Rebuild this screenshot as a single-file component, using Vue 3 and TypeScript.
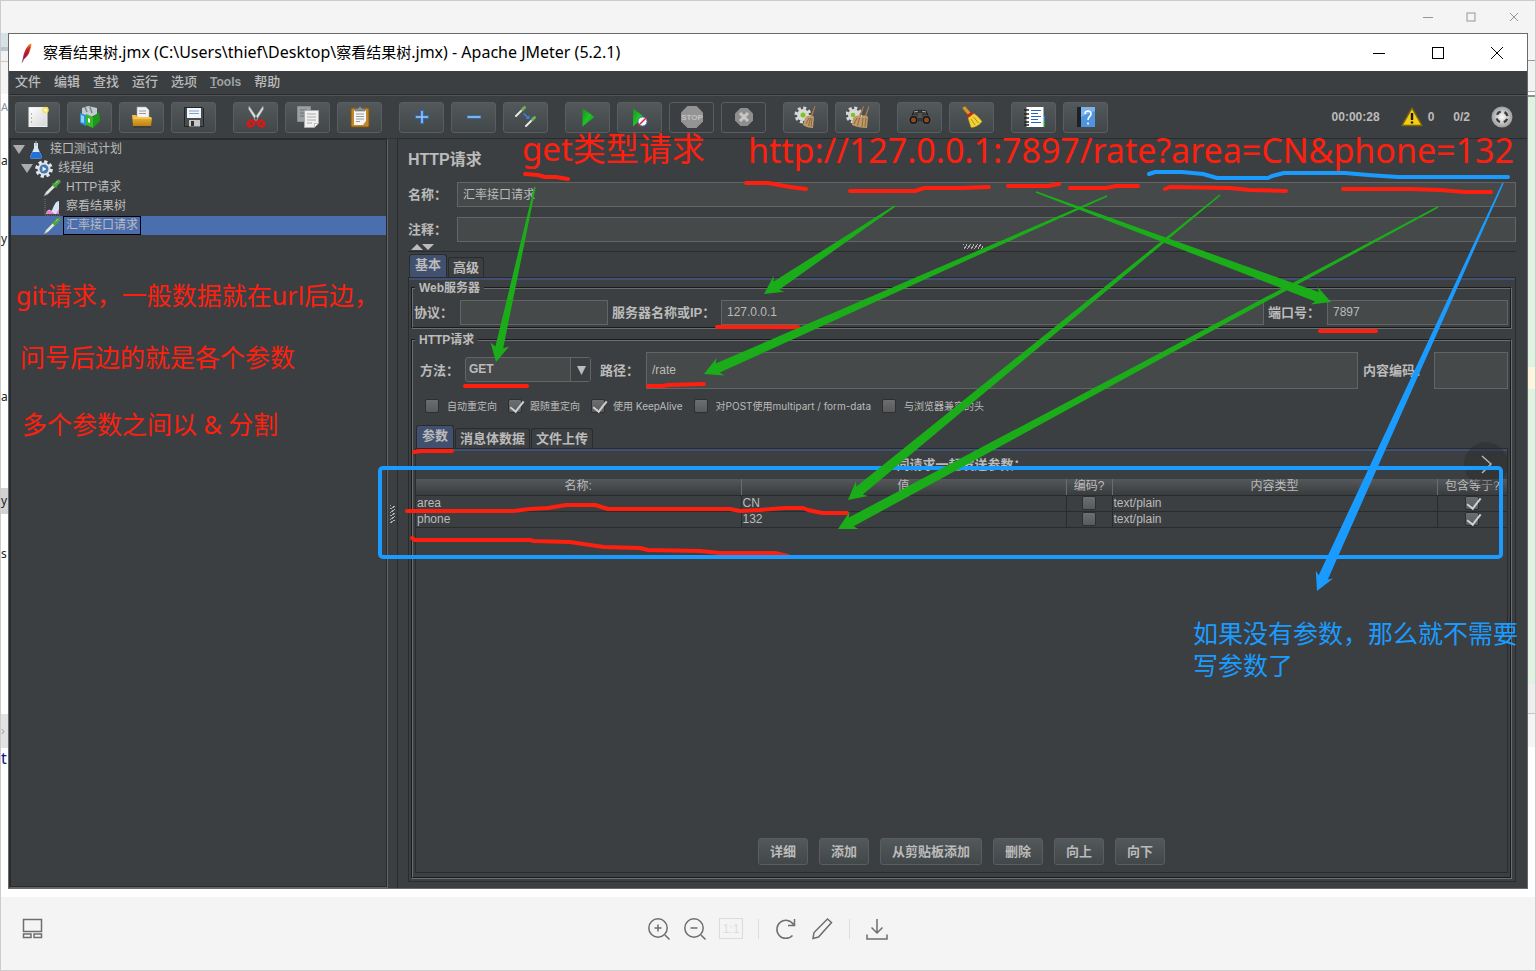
<script setup lang="ts">
import { ref } from 'vue'

interface Point { x: number; y: number }

const menus = ['文件', '编辑', '查找', '运行', '选项', 'Tools', '帮助']

const toolGroups: { icon: string; label: string; off?: boolean }[][] = [
  [
    { icon: 'new', label: '新建' },
    { icon: 'templates', label: '模板' },
    { icon: 'open', label: '打开' },
    { icon: 'save', label: '保存' },
  ],
  [
    { icon: 'cut', label: '剪切' },
    { icon: 'copy', label: '复制' },
    { icon: 'paste', label: '粘贴' },
  ],
  [
    { icon: 'plus', label: '展开' },
    { icon: 'minus', label: '收起' },
    { icon: 'toggle', label: '切换' },
  ],
  [
    { icon: 'start', label: '启动' },
    { icon: 'startno', label: '无间隔启动' },
    { icon: 'stop', label: '停止', off: true },
    { icon: 'shutdown', label: '关闭', off: true },
  ],
  [
    { icon: 'clear', label: '清除' },
    { icon: 'clearall', label: '清除全部' },
  ],
  [
    { icon: 'search', label: '查找' },
    { icon: 'broom', label: '重置查找' },
  ],
  [
    { icon: 'notes', label: '函数助手' },
    { icon: 'help', label: '帮助' },
  ],
]

const tree = [
  { text: '接口测试计划', icon: 'flask', depth: 0, open: true },
  { text: '线程组', icon: 'gear', depth: 1, open: true },
  { text: 'HTTP请求', icon: 'dropper', depth: 2, open: false },
  { text: '察看结果树', icon: 'chart', depth: 2, open: false },
  { text: '汇率接口请求', icon: 'dropper', depth: 2, open: false },
]
const selected = ref(4)

const options = ref([
  { text: '自动重定向', on: false },
  { text: '跟随重定向', on: true },
  { text: '使用 KeepAlive', on: true },
  { text: '对POST使用multipart / form-data', on: false },
  { text: '与浏览器兼容的头', on: false },
])

const rows = ref([
  { name: 'area', value: 'CN', encode: false, type: 'text/plain', equals: true },
  { name: 'phone', value: '132', encode: false, type: 'text/plain', equals: true },
])

const actions = ['详细', '添加', '从剪贴板添加', '删除', '向上', '向下']

const form = ref({
  name: '汇率接口请求',
  note: '',
  protocol: '',
  server: '127.0.0.1',
  port: '7897',
  method: 'GET',
  path: '/rate',
  encoding: '',
})

/* Tapered arrow: a thin tail widening to the neck of the head. */
function arrow(from: Point, to: Point, half: number): string {
  const dx = to.x - from.x
  const dy = to.y - from.y
  const len = Math.hypot(dx, dy)
  const ux = dx / len
  const uy = dy / len
  const at = (back: number, side: number) =>
    `${(to.x - ux * back - uy * side).toFixed(1)},${(to.y - uy * back + ux * side).toFixed(1)}`
  return [
    at(len, 0.8), at(15, half), at(18, 9.5), at(0, 0), at(18, -9.5), at(15, -half), at(len, -0.8),
  ].join(' ')
}

const greenArrows = [
  arrow({ x: 535, y: 187 }, { x: 496, y: 362 }, 4),
  arrow({ x: 895, y: 206 }, { x: 764, y: 294 }, 5),
  arrow({ x: 1107, y: 196 }, { x: 704, y: 374 }, 5),
  arrow({ x: 1036, y: 192 }, { x: 1331, y: 302 }, 5),
  arrow({ x: 1220, y: 195 }, { x: 848, y: 500 }, 5),
  arrow({ x: 1438, y: 207 }, { x: 838, y: 529 }, 5),
]
const blueArrow = arrow({ x: 1503, y: 183 }, { x: 1317, y: 591 }, 5)

const redStrokes = [
  '525,174 538,175 545,177 556,177 568,179',
  '746,183 768,183 790,187 806,189',
  '850,191 915,191 924,188 960,188 989,187',
  '1008,186 1048,186 1059,184',
  '1070,188 1106,188 1116,186 1138,186',
  '1165,189 1170,187 1230,188 1250,190 1286,191',
  '1343,189 1410,189 1440,190 1465,192 1491,192',
  '717,327 798,327',
  '1320,331 1376,331',
  '465,386 527,386',
  '648,386 663,386 668,385 704,384',
  '414,452 421,451 452,451',
  '407,511 513,511 530,509 548,508 566,505 595,505 608,509 730,509 740,511 760,510 785,508 803,508 808,510 822,513 847,513',
  '412,538 415,540 530,540 534,541 570,542 590,545 604,547 640,548 648,550 700,551 720,553 775,553 788,556',
]
const blueStroke =
  '1149,174 1155,172 1182,172 1203,174 1217,178 1268,178 1272,176 1284,173 1345,173 1368,175 1398,177 1508,177'
</script>

<template>
  <div class="viewer">
    <svg class="defs" aria-hidden="true">
      <defs>
        <linearGradient id="gGreen" x1="0" y1="0" x2="1" y2="1">
          <stop offset="0" stop-color="#1d8a22" /><stop offset=".5" stop-color="#1fc423" /><stop offset="1" stop-color="#0c8a10" />
        </linearGradient>
        <linearGradient id="gGold" x1="0" y1="0" x2="0" y2="1">
          <stop offset="0" stop-color="#f3c243" /><stop offset="1" stop-color="#c07f10" />
        </linearGradient>
        <linearGradient id="gPaper" x1="0" y1="0" x2="1" y2="1">
          <stop offset="0" stop-color="#fff" /><stop offset="1" stop-color="#d5d5d5" />
        </linearGradient>
        <radialGradient id="gBall"><stop offset="0" stop-color="#fff" /><stop offset="1" stop-color="#9c9c9c" /></radialGradient>
        <linearGradient id="gFeather" x1="1" y1="0" x2="0" y2="1">
          <stop offset="0" stop-color="#f79a23" /><stop offset=".4" stop-color="#d22128" /><stop offset="1" stop-color="#6d2a7c" />
        </linearGradient>
      </defs>
      <symbol id="i-feather" viewBox="0 0 14 20">
        <path d="M11.5 0.5C8 1 4.5 7 3 14.5L2 19.5L3.4 16C8 14.500 11 7 11.500 0.500Z" fill="url(#gFeather)" />
        <path d="M10 4L2 19.500" stroke="#7d1730" stroke-width=".7" fill="none" />
      </symbol>
      <symbol id="i-new" viewBox="0 0 24 24">
        <rect x="3" y="2.500" width="18" height="19" fill="url(#gPaper)" stroke="#efefef" />
        <circle cx="19.500" cy="5" r="3.200" fill="#f3e25a" /><circle cx="19.500" cy="5" r="1.500" fill="#fffce0" />
        <path d="M5 9h1M5 13h1M5 17h1" stroke="#777" />
      </symbol>
      <symbol id="i-templates" viewBox="0 0 24 24">
        <path d="M4 3l6-2 9 2v6l-6 3-9-2z" fill="#c3ccd0" /><path d="M7 2l2 5M12 2l2 6" stroke="#76858c" stroke-width="1.500" />
        <path d="M2 8l6 2v11l-6-3z" fill="#2b93d6" /><path d="M3 10l3 1v7l-3-1z" fill="#8fd3f7" />
        <path d="M8 9l7 3v11l-7-3z" fill="#35ba2c" /><path d="M15 12l6-5 1 9-7 7z" fill="#1a9a18" /><path d="M10 13l2 1v4l-2-1z" fill="#fff" />
      </symbol>
      <symbol id="i-open" viewBox="0 0 24 24">
        <path d="M7 2h9l3 3v10H7z" fill="#f2f2f2" stroke="#aaa" stroke-width=".6" />
        <path d="M9 6h7M9 8.500h7" stroke="#999" />
        <path d="M2 10h4l2 2h13l1 1-1 8H3z" fill="url(#gGold)" /><path d="M3 13h18" stroke="#ffd978" /><path d="M3 22h18" stroke="#222" stroke-opacity=".5" />
      </symbol>
      <symbol id="i-save" viewBox="0 0 24 24">
        <path d="M2.500 2.500h18l1 1v18h-19z" fill="#4a4d50" stroke="#202224" />
        <rect x="5" y="3" width="14" height="10" fill="#f3f6fa" /><path d="M7 6h10M7 8.500h10" stroke="#7fa3cf" />
        <rect x="7" y="15" width="11" height="6.500" fill="#c9c9c9" /><rect x="9" y="16" width="3" height="5" fill="#333" />
      </symbol>
      <symbol id="i-cut" viewBox="0 0 24 24">
        <path d="M5 1l9 13-2 2L4.500 4zM19 1l-9 13 2 2 7.500-12z" fill="#dcdcdc" stroke="#8c8c8c" stroke-width=".5" />
        <ellipse cx="7" cy="18.500" rx="3.400" ry="2.600" fill="none" stroke="#d81818" stroke-width="2.800" transform="rotate(-35 7 18.500)" />
        <ellipse cx="17" cy="18.500" rx="3.400" ry="2.600" fill="none" stroke="#d81818" stroke-width="2.800" transform="rotate(35 17 18.500)" />
      </symbol>
      <symbol id="i-copy" viewBox="0 0 24 24">
        <path d="M1.500 1.500h13v15h-13z" fill="#9da0a1" stroke="#8a8c8d" /><path d="M4 5h7M4 8h7M4 11h4" stroke="#6c6f70" />
        <path d="M8.500 5.500h14v13l-4 4h-10z" fill="#f0f0f0" stroke="#aaa" /><path d="M11 9h9M11 12h9M11 15h9M11 18h5" stroke="#aaa" /><path d="M18.500 22.500v-4h4z" fill="#fff" stroke="#999" stroke-width=".6" />
      </symbol>
      <symbol id="i-paste" viewBox="0 0 24 24">
        <rect x="3" y="3" width="18" height="19" rx="1" fill="#c0872f" stroke="#80530f" />
        <path d="M6 5h12v11l-3 4H6z" fill="#f5f5f5" /><path d="M8 9h8M8 11.500h8M8 14h8M8 16.500h4" stroke="#999" />
        <path d="M7 6V3.500h3L12 1l2 2.500h3V6z" fill="#8a8f91" stroke="#555" stroke-width=".5" />
      </symbol>
      <symbol id="i-plus" viewBox="0 0 24 24">
        <path d="M12 5v14M5 12h14" stroke="#2f6fc0" stroke-width="3.500" /><path d="M12 6v12M6 12h12" stroke="#9cc8f5" stroke-width="1.500" />
      </symbol>
      <symbol id="i-minus" viewBox="0 0 24 24">
        <path d="M5 12h14" stroke="#2f6fc0" stroke-width="3.500" /><path d="M5.500 12h13" stroke="#9cc8f5" stroke-width="1.500" />
      </symbol>
      <symbol id="i-toggle" viewBox="0 0 24 24">
        <path d="M2 11l7-7M12 21l7-7" stroke="#e6e9e6" stroke-width="2" stroke-linecap="round" />
        <path d="M8.500 4.500l2-2M18.500 14.500l2-2" stroke="#6fb05a" stroke-width="3" stroke-linecap="round" />
        <path d="M9.500 8.500l4.500 4" stroke="#3a86dc" stroke-width="1.600" /><path d="M15.500 10v4h-4z" fill="#3a86dc" />
      </symbol>
      <symbol id="i-start" viewBox="0 0 24 24"><path d="M6.500 3l12 9-12 9.500z" fill="url(#gGreen)" /></symbol>
      <symbol id="i-startno" viewBox="0 0 24 24">
        <path d="M5 3l11 9-11 9.500z" fill="url(#gGreen)" /><circle cx="14.500" cy="16.500" r="4.500" fill="#f2f5fb" stroke="#4f78b8" /><path d="M10.500 20.500l8-8" stroke="#d22" stroke-width="1.500" />
      </symbol>
      <symbol id="i-stop" viewBox="0 0 24 24">
        <path d="M7.500 1h9L23 7.500v9L16.500 23h-9L1 16.500v-9z" fill="#949494" />
      </symbol>
      <symbol id="i-shutdown" viewBox="0 0 24 24">
        <path d="M8.500 3h7L21 8.500v7L15.500 21h-7L3 15.500v-7z" fill="#8f8f8f" /><path d="M8 8l8 8M16 8l-8 8" stroke="#c8c8c8" stroke-width="3" />
      </symbol>
      <symbol id="i-clear" viewBox="0 0 24 24">
        <circle cx="9" cy="10" r="6" fill="#d9d9d9" /><circle cx="9" cy="10" r="7" fill="none" stroke="#d9d9d9" stroke-width="3" stroke-dasharray="3 2.500" />
        <circle cx="9" cy="10" r="2.500" fill="#7cc520" />
        <path d="M20.500 1l1 .5-3.500 11h-2z" fill="#a5784a" /><path d="M11 13c3-3 7-3 9-1l-1 11c-4 0-7-1-10-3z" fill="#c09a6b" /><path d="M12 19l3-6M14.500 21l2-8M17 22l1-9" stroke="#7e5c34" stroke-width=".8" />
      </symbol>
      <symbol id="i-clearall" viewBox="0 0 24 24">
        <circle cx="8" cy="10" r="6" fill="#d9d9d9" /><circle cx="8" cy="10" r="7" fill="none" stroke="#d9d9d9" stroke-width="3" stroke-dasharray="3 2.500" />
        <circle cx="7" cy="10" r="2.300" fill="#7cc520" />
        <path d="M17 1l1 .5-3.500 11h-2zM22.500 1l1 .5-3.500 11h-2z" fill="#a5784a" /><path d="M7 13c3-3 6-3 8-1 2-2 5-2 7 0l-1 11c-5 0-11-1-15-3z" fill="#c09a6b" /><path d="M8 19l3-6M11.500 21l2-8M16 22l1-9M19 22l1-9" stroke="#7e5c34" stroke-width=".8" />
      </symbol>
      <symbol id="i-search" viewBox="0 0 24 24">
        <path d="M2 15l4-9 5-1v11zM22 15l-4-9-5-1v11z" fill="#3c3c3c" stroke="#181818" /><path d="M6 7l4-1M14 6l4 1" stroke="#aaa" />
        <rect x="10" y="8" width="4" height="5" fill="#555" /><circle cx="5.500" cy="15" r="4.500" fill="#151515" stroke="#666" stroke-width=".7" /><circle cx="18.500" cy="15" r="4.500" fill="#151515" stroke="#666" stroke-width=".7" />
        <circle cx="5.500" cy="15" r="2.500" fill="#8b4a26" /><circle cx="18.500" cy="15" r="2.500" fill="#8b4a26" />
      </symbol>
      <symbol id="i-broom" viewBox="0 0 24 24">
        <path d="M2 3l3-2 6 7-3 2z" fill="#d29a2e" stroke="#8a5c0e" stroke-width=".5" /><path d="M6.500 10.500L12 6.500l2 2.500-6 4z" fill="#c8251d" />
        <path d="M8 13l6-4.500c4 3 6 5 8 8-3 4-7 6-11 6z" fill="#f2d43a" stroke="#a58211" stroke-width=".5" /><path d="M11 14l4 6M13.500 12l5 6" stroke="#b08d12" />
      </symbol>
      <symbol id="i-notes" viewBox="0 0 24 24">
        <path d="M19 11h4v5h-4z" fill="#2d7be0" /><path d="M19 16h4v6h-4z" fill="#25a622" />
        <rect x="4.500" y="2" width="17" height="20" fill="#fff" /><path d="M9 5.500h10M9 8.500h7M9 11.500h10M9 14.500h7M9 17.500h10" stroke="#2b62c0" stroke-width="1.200" />
        <path d="M2 5h5M2 9h5M2 13h5M2 17h5M2 20h5" stroke="#222" stroke-width="1.400" />
      </symbol>
      <symbol id="i-help" viewBox="0 0 24 24">
        <rect x="3" y="2" width="5" height="20" fill="#1d2126" /><rect x="7" y="2" width="14" height="20" fill="#4e94df" /><path d="M7 2h14v4L7 12z" fill="#79b2ee" />
        <path d="M11 9c0-4 6.500-4 6 0 0 2.500-3 2.500-3 6M14 17.500v2" stroke="#fff" stroke-width="1.600" fill="none" />
      </symbol>
      <symbol id="i-warn" viewBox="0 0 22 20">
        <path d="M11 1L21 18.500H1z" fill="#f5cd12" stroke="#7a6510" stroke-width="1.500" stroke-linejoin="round" /><path d="M11 6v7M11 14.500v2" stroke="#151515" stroke-width="2.400" />
      </symbol>
      <symbol id="i-ball" viewBox="0 0 22 22">
        <circle cx="11" cy="11" r="10.500" fill="url(#gBall)" /><circle cx="11" cy="11" r="5.500" fill="none" stroke="#3d3d3d" stroke-width="2.400" stroke-dasharray="4.600 4.040" stroke-dashoffset="-2" />
      </symbol>
      <symbol id="i-flask" viewBox="0 0 18 18">
        <path d="M7 2h4v5l4 9q0 1.500-2 1.500H5Q3 17.500 3 16l4-9z" fill="#d8e6f3" /><path d="M5.500 11h7l2.500 5q0 1.500-2 1.500H5Q3 17.500 3 16z" fill="#1e72d8" /><path d="M9 0v5" stroke="#aac" />
      </symbol>
      <symbol id="i-gear" viewBox="0 0 18 18">
        <circle cx="9" cy="9" r="7.300" fill="none" stroke="#e3e8ec" stroke-width="3" stroke-dasharray="3.200 2.530" /><circle cx="9" cy="9" r="6.500" fill="#dfe5ea" />
        <circle cx="9" cy="9" r="4.500" fill="#4578ad" /><path d="M7.500 6.500v5l4-2.500z" fill="#eaf2fa" />
      </symbol>
      <symbol id="i-dropper" viewBox="0 0 18 18">
        <path d="M1 17l2-4 7-7 2 2-7 7z" fill="#dfe6df" stroke="#8a928a" stroke-width=".5" /><path d="M10 5l3 3" stroke="#3d8f33" stroke-width="2" stroke-linecap="round" /><path d="M12 6l3.500-3.500" stroke="#4fa344" stroke-width="4" stroke-linecap="round" /><path d="M12.500 4.500l2.500-2.500" stroke="#98d58a" />
      </symbol>
      <symbol id="i-chart" viewBox="0 0 18 18">
        <path d="M2 1v16h15" stroke="#777" fill="none" stroke-dasharray="1 1" /><path d="M3 16c1-5 4-5 5-3 2 0 3-10 8-10v13z" fill="#d7e4f8" /><path d="M3 16c1-4 3-4.500 5-3l4 3zM13 16l3-5v5z" fill="#ef7ad0" />
      </symbol>
    </svg>

    <header class="viewer-bar">
      <button class="vctl" type="button" aria-label="最小化"><svg width="12" height="12"><path d="M1 6.500h10" /></svg></button>
      <button class="vctl" type="button" aria-label="最大化"><svg width="12" height="12"><rect x="2" y="2" width="8" height="8" /></svg></button>
      <button class="vctl" type="button" aria-label="关闭"><svg width="12" height="12"><path d="M2 2l8 8M10 2l-8 8" /></svg></button>
    </header>

    <div class="photo">
      <div class="edge-left" aria-hidden="true">
        <span class="peek band-top"></span>
        <span class="peek ja">A</span>
        <span class="peek ua">a</span>
        <span class="peek by">y</span>
        <span class="peek ta">a</span>
        <span class="peek hy">y</span>
        <span class="peek sc">s</span>
        <span class="peek gx">›</span>
        <span class="peek nt">t</span>
      </div>

      <main class="jmeter">
        <div class="titlebar">
          <svg class="feather"><use href="#i-feather" /></svg>
          <h1><span class="han">察看结果树</span>.jmx (C:\Users\thief\Desktop\<span class="han">察看结果树</span>.jmx) - Apache JMeter (5.2.1)</h1>
          <button class="wctl" type="button" aria-label="最小化"><svg width="14" height="14"><path d="M1 7.500h12" /></svg></button>
          <button class="wctl" type="button" aria-label="最大化"><svg width="14" height="14"><rect x="1.500" y="1.500" width="11" height="11" /></svg></button>
          <button class="wctl" type="button" aria-label="关闭"><svg width="14" height="14"><path d="M1 1l12 12M13 1L1 13" /></svg></button>
        </div>

        <nav class="menubar">
          <button v-for="m in menus" :key="m" type="button" :class="{ latin: m === 'Tools' }">
            <template v-if="m === 'Tools'"><u>T</u>ools</template><template v-else>{{ m }}</template>
          </button>
        </nav>

        <div class="toolbar">
          <div v-for="(g, gi) in toolGroups" :key="gi" class="tool-group">
            <button v-for="t in g" :key="t.icon" type="button" class="tool" :class="{ off: t.off }" :aria-label="t.label">
              <svg viewBox="0 0 24 24">
                <use :href="'#i-' + t.icon" />
                <text v-if="t.icon === 'stop'" class="stop-text" x="12" y="15">STOP</text>
              </svg>
            </button>
          </div>
          <div class="status">
            <span class="clock">00:00:28</span>
            <svg class="warn"><use href="#i-warn" /></svg>
            <span class="errors">0</span>
            <span class="threads">0/2</span>
            <svg class="ball"><use href="#i-ball" /></svg>
          </div>
        </div>

        <div class="split">
          <ul class="tree">
            <li v-for="(n, i) in tree" :key="i" :class="['d' + n.depth, { sel: i === selected }]" @click="selected = i">
              <span v-if="n.open" class="twist"></span>
              <svg><use :href="'#i-' + n.icon" /></svg>
              <span class="node">{{ n.text }}</span>
            </li>
          </ul>
          <div class="divider"><span class="grip-v"></span></div>

          <section class="editor">
            <h2>HTTP请求</h2>
            <div class="line"><label for="f-name">名称：</label><input id="f-name" v-model="form.name" type="text" /></div>
            <div class="line"><label for="f-note">注释：</label><input id="f-note" v-model="form.note" type="text" /></div>
            <div class="collapser">
              <span class="updown"><svg width="24" height="7"><path d="M0 7l6-6 6 6zM11 1h12l-6 6z" /></svg></span>
              <span class="grip-h"></span>
            </div>

            <div class="tabs outer">
              <button type="button" class="on">基本</button><button type="button">高级</button>
            </div>
            <div class="panel outer-panel">
              <fieldset class="web">
                <legend>Web服务器</legend>
                <div class="frow">
                  <label for="f-proto" class="w-proto">协议：</label><input id="f-proto" v-model="form.protocol" class="i-proto" type="text" />
                  <label for="f-server" class="w-server">服务器名称或IP：</label><input id="f-server" v-model="form.server" class="grow" type="text" />
                  <label for="f-port" class="w-port">端口号：</label><input id="f-port" v-model="form.port" class="i-port" type="text" />
                </div>
              </fieldset>

              <fieldset class="http">
                <legend>HTTP请求</legend>
                <div class="frow tall">
                  <label for="f-method" class="w-method">方法：</label>
                  <span class="combo">
                    <select id="f-method" v-model="form.method"><option>GET</option><option>POST</option></select>
                    <svg width="20" height="23" aria-hidden="true"><path d="M6 8h9l-4.500 9z" /></svg>
                  </span>
                  <label for="f-path" class="w-path">路径：</label><input id="f-path" v-model="form.path" class="grow" type="text" />
                  <label for="f-enc" class="w-enc">内容编码：</label><input id="f-enc" v-model="form.encoding" class="i-enc" type="text" />
                </div>
                <div class="checks">
                  <label v-for="o in options" :key="o.text"><input v-model="o.on" type="checkbox" />{{ o.text }}</label>
                </div>

                <div class="tabs inner">
                  <button type="button" class="on">参数</button><button type="button">消息体数据</button><button type="button">文件上传</button>
                </div>
                <div class="panel inner-panel">
                  <h3>同请求一起发送参数：</h3>
                  <table>
                    <colgroup><col /><col /><col class="c-enc" /><col /><col class="c-eq" /></colgroup>
                    <thead>
                      <tr><th>名称:</th><th>值</th><th>编码?</th><th>内容类型</th><th>包含等于?</th></tr>
                    </thead>
                    <tbody>
                      <tr v-for="r in rows" :key="r.name">
                        <td>{{ r.name }}</td>
                        <td>{{ r.value }}</td>
                        <td class="mid"><input v-model="r.encode" type="checkbox" :aria-label="r.name + ' 编码'" /></td>
                        <td>{{ r.type }}</td>
                        <td class="mid"><input v-model="r.equals" type="checkbox" :aria-label="r.name + ' 包含等于'" /></td>
                      </tr>
                    </tbody>
                  </table>
                  <div class="actions">
                    <button v-for="a in actions" :key="a" type="button">{{ a }}</button>
                  </div>
                </div>
              </fieldset>
            </div>
          </section>
        </div>
      </main>

      <div class="edge-right" aria-hidden="true">
        <span class="er-bar"></span><span class="er-tab"></span><span class="er-green"></span><span class="er-mark"></span>
        <span class="er-green2"></span><span class="er-low"></span><span class="er-low2"></span>
      </div>
    </div>

    <footer class="viewer-tools">
      <button type="button" class="thumbs" aria-label="缩略图"><svg width="22" height="22"><path d="M2.500 1.500h18v12h-18zM2.500 16h7.500v3.500H2.500zM13 16h7.500v3.500H13z" /></svg></button>
      <div class="center">
        <button type="button" aria-label="放大"><svg width="24" height="24"><circle cx="11" cy="11" r="9.200" /><path d="M18 18l4.500 4.500M11 7.500v7M7.500 11h7" /></svg></button>
        <button type="button" aria-label="缩小"><svg width="24" height="24"><circle cx="11" cy="11" r="9.200" /><path d="M18 18l4.500 4.500M7.500 11h7" /></svg></button>
        <button type="button" class="ratio" aria-label="原始大小"><span>1:1</span></button>
        <i class="bar"></i>
        <button type="button" aria-label="旋转"><svg width="24" height="24"><path d="M18.500 18.500A9 9 0 1 1 19.500 7.500M20.500 2v6.500h-6.500" /></svg></button>
        <button type="button" aria-label="编辑"><svg width="24" height="24"><path d="M3 21.500l1-6L17.500 2l4 3.500L8.500 20z" /></svg></button>
        <i class="bar"></i>
        <button type="button" aria-label="下载"><svg width="24" height="24"><path d="M12 2v14M6.500 10.500L12 16l5.500-5.500M2 17.500v4.500h20v-4.500" /></svg></button>
      </div>
    </footer>

    <button class="next" type="button" aria-label="下一张"><svg width="44" height="44"><path d="M18 14l9 8-9 9" /></svg></button>

    <svg class="marks" aria-label="标注">
      <g class="red-line"><polyline v-for="p in redStrokes" :key="p" :points="p" /></g>
      <rect class="blue-line frame" x="380" y="468" height="89" rx="3" />
      <polyline class="blue-line" :points="blueStroke" />
      <polygon v-for="p in greenArrows" :key="p" class="green" :points="p" />
      <polygon class="blue" :points="blueArrow" />
      <g class="red big">
        <text x="522" y="161">get类型请求</text>
        <text class="url" x="748" y="163">http://127.0.0.1:7897/rate?area=CN&amp;phone=132</text>
      </g>
      <g class="red mid-text">
        <text x="16" y="305">git请求，一般数据就在url后边，</text>
        <text x="20" y="367">问号后边的就是各个参数</text>
        <text x="22" y="434">多个参数之间以 &amp; 分割</text>
      </g>
      <g class="blue mid-text">
        <text x="1193" y="643">如果没有参数，那么就不需要</text>
        <text x="1193" y="675">写参数了</text>
      </g>
    </svg>
  </div>
</template>

<style>
html, body { background: #f4f4f4; }
</style>

<style scoped>
* { box-sizing: border-box; }
.viewer {
  position: relative;
  display: flex;
  flex-direction: column;
  min-height: 100vh;
  border: 1px solid #cccccc;
  border-bottom-color: #d0d0d0;
  background: #f4f4f4;
  color: #bbbbbb;
  font: 12px/16px "Liberation Sans", "Noto Sans CJK SC", sans-serif;
}
.defs { position: absolute; width: 0; height: 0; }
button { font: inherit; color: inherit; margin: 0; padding: 0; border: 0; background: none; }
svg { display: block; }

.viewer-bar { display: flex; justify-content: flex-end; align-items: center; gap: 31px; height: 32px; padding-right: 15px; }
.vctl svg { fill: none; stroke: #969696; }

.photo { flex: 1; display: flex; padding-bottom: 8px; background: #fff; }
.edge-left { position: relative; width: 7px; background: #fff; color: #222; font: 12px/20px "Noto Sans", sans-serif; }
.peek { position: absolute; left: 0; }
.band-top { top: 0; width: 7px; height: 61px; background: linear-gradient(#d7e1e8 0 14px, #b9c6cf 14px 18px, #f2f2f2 18px 28px, #c9c9c9 28px 29px, #f4f4f4 29px); }
.ja { top: 64px; font-size: 11px; color: #8091a8; }
.ua { top: 118px; }
.by { top: 196px; }
.ta { top: 354px; }
.hy { top: 455px; width: 7px; height: 26px; line-height: 26px; background: #d2d2d2; }
.sc { top: 511px; }
.gx { top: 681px; width: 7px; height: 34px; line-height: 34px; background: #e2e2e2; color: #a0a8b0; }
.nt { top: 715px; color: #12128c; font-size: 16px; }
.edge-right { width: 7px; display: flex; flex-direction: column; background: #fff; }
.er-bar { height: 28px; background: #f4f4f4; border-bottom: 1px solid #999; }
.er-tab { height: 36px; background: linear-gradient(#f2f2f2 0 30px, #a9a9a9 30px 31px, #fff 31px 34px, #8f8f8f 34px); }
.er-green { height: 270px; background: #e0f2e2; }
.er-mark { height: 22px; background: #fdf6dc; }
.er-green2 { height: 295px; background: #e0f2e2; }
.er-low { height: 30px; background: #eeeeee; border-bottom: 1px solid #c4c4c4; }
.er-low2 { height: 33px; background: #f4f4f4; }

.jmeter { flex: 1; min-width: 0; display: flex; flex-direction: column; border: 1px solid #6a6a6c; background: #3c3f41; }
.titlebar { display: flex; align-items: center; height: 37px; padding-right: 1px; background: #fff; color: #000; }
.feather { width: 14px; height: 20px; margin-left: 11px; }
.titlebar h1 { flex: 1; margin: 0 0 2px 9px; font: 16px/20px "Noto Sans", "Noto Sans CJK SC", sans-serif; white-space: nowrap; }
.titlebar .han { font-size: 15px; }
.wctl { width: 59px; height: 37px; display: flex; justify-content: center; align-items: center; }
.wctl svg { fill: none; stroke: #000; }

.menubar { display: flex; align-items: center; gap: 13px; height: 24px; padding: 0 0 2px 6px; border-bottom: 1px solid #292b2c; font-size: 13px; font-weight: 500; }
.menubar .latin { font-size: 12px; font-weight: 700; color: #9fa3a6; }

.toolbar { display: flex; align-items: center; height: 43px; padding-left: 6px; border-top: 1px solid #525557; }
.tool-group { display: flex; gap: 7px; margin-right: 17px; }
.tool { width: 45px; height: 31px; display: flex; justify-content: center; align-items: center; border: 1px solid #5a5e60; border-radius: 3px; background: linear-gradient(#53585a, #424749); }
.tool svg { width: 24px; height: 24px; }
.tool.off { background: #3c3f41; }
.stop-text { font: 700 8px "Liberation Sans", sans-serif; text-anchor: middle; fill: #c2c2c2; }
.status { flex: 1; display: flex; align-items: center; justify-content: flex-end; padding-right: 14px; font-weight: 700; }
.warn { width: 22px; height: 20px; margin-left: 21px; }
.errors { margin-left: 5px; }
.threads { margin-left: 19px; }
.ball { width: 22px; height: 22px; margin-left: 21px; }

.split { flex: 1; display: flex; }
.tree { width: 379px; margin: 0; padding: 0 1px; list-style: none; border: solid #292b2c; border-width: 2px 1px 1px 1px; box-shadow: inset -1px -1px #292b2c, inset 1px 0 #292b2c; border-right-color: #646464; border-bottom-color: #646464; }
.tree li { display: flex; align-items: center; height: 19px; }
.tree svg { width: 18px; height: 18px; }
.twist { width: 0; border: 6px solid transparent; border-top: 9px solid #acacac; border-bottom: 0; margin-right: 2px; }
.d0 { padding-left: 2px; }
.d1 { padding-left: 10px; }
.d2 { padding-left: 32px; }
.node { padding: 0 2px; margin-left: 2px; line-height: 17px; border: 1px solid transparent; }
.sel { background: #4b6eaf; }
.sel .node { border-color: #000; }
.divider { width: 10px; display: flex; align-items: center; justify-content: center; border-top: 1px solid #313435; border-right: 1px solid #292b2c; }
.grip-v { width: 5px; height: 18px; background: repeating-linear-gradient(150deg, #b0b0b0 0 1px, transparent 1px 3px); }

.editor { flex: 1; min-width: 0; display: flex; flex-direction: column; padding: 9px 11px 6px 10px; border-top: 1px solid #292b2c; }
.editor h2 { margin: 0 0 10px; font-size: 16px; line-height: 24px; font-weight: 700; }
.editor h2, .editor h3 { color: #bbbbbb; }
input[type="text"] { min-width: 0; height: 25px; padding: 0 5px 2px; border: 1px solid #646464; background: #45494a; color: #bbbbbb; font: inherit; outline: 0; }
label { font-size: 13px; font-weight: 700; white-space: nowrap; }
.line { display: flex; align-items: center; margin-bottom: 10px; }
.line label { width: 49px; }
.line input { flex: 1; }
.line + .line { margin-bottom: 0; }
.collapser { display: flex; align-items: center; height: 10px; border-bottom: 1px solid #292b2c; }
.updown { flex: 1; padding-left: 3px; }
.updown path { fill: #bbbbbb; }
.grip-h { width: 20px; height: 5px; margin-right: 533px; background: repeating-linear-gradient(120deg, #b0b0b0 0 1px, transparent 1px 3px); }

.tabs { display: flex; align-items: flex-end; gap: 1px; font-size: 13px; font-weight: 700; line-height: 18px; }
.tabs button { height: 20px; padding: 0 4px; border: 1px solid #292b2c; border-bottom: 0; border-radius: 3px 3px 0 0; }
.tabs .on { height: 23px; padding: 0 5px 2px; background: #41506e; }
.outer { margin-top: 2px; padding-left: 1px; }
.panel { flex: 1; display: flex; flex-direction: column; border: 1px solid #292b2c; box-shadow: inset 0 2px #414f70; }
.outer-panel { padding: 2px 3px 2px 2px; }

fieldset { min-width: 0; margin: 0; padding: 4px 2px 2px 1px; border: 2px groove #6b6e70; }
legend { padding: 0 4px; margin-left: 1px; font-size: 12px; font-weight: 700; line-height: 16px; }
.frow { display: flex; align-items: center; }
.grow { flex: 1; }
.w-proto { width: 46px; }
.i-proto { width: 148px; }
.w-server { width: 113px; padding-left: 4px; }
.w-port { width: 63px; padding-left: 4px; }
.i-port { width: 181px; }
.http { flex: 1; display: flex; flex-direction: column; margin-top: 3px; }
.tall input[type="text"] { height: 37px; }
.w-method { width: 51px; padding-left: 6px; }
.w-path { width: 55px; padding-left: 9px; }
.w-enc { width: 76px; padding-left: 5px; }
.i-enc { width: 74px; }
.combo { position: relative; width: 126px; height: 25px; margin-bottom: 2px; }
.combo select { width: 100%; height: 25px; padding: 0 3px 2px; border: 1px solid #646464; border-radius: 3px; background: #45494a; color: #bbbbbb; font: 700 12px/20px "Liberation Sans", sans-serif; appearance: none; outline: 0; }
.combo svg { position: absolute; right: 1px; top: 1px; border-left: 1px solid #646464; background: #3c3f41; pointer-events: none; }
.combo path { fill: #bbbbbb; }

.checks { display: flex; align-items: center; height: 14px; margin: 10px 0; padding-left: 11px; gap: 11px; }
.checks label { display: flex; align-items: center; gap: 8px; font: 10px/14px Inter, "Noto Sans CJK SC", sans-serif; }
input[type="checkbox"] { appearance: none; width: 14px; height: 14px; margin: 0; border: 1px solid #2c2e2f; border-radius: 2px; background: linear-gradient(#6c6e70, #585a5c); }
input[type="checkbox"]:checked { position: relative; }
input[type="checkbox"]:checked::after { content: ""; position: absolute; left: 4px; top: -2px; width: 6px; height: 12px; border: solid #d0d0d0; border-width: 0 2px 2px 0; rotate: 38deg; }

.inner { margin-top: 2px; padding-left: 2px; }
.inner-panel { margin-left: 1px; margin-bottom: 2px; }
.inner-panel h3 { margin: 8px 0 6px; text-align: center; font-size: 13px; line-height: 16px; font-weight: 700; }
table { width: 100%; table-layout: fixed; border-collapse: collapse; }
.c-enc { width: 46px; }
.c-eq { width: 70px; }
th { height: 16px; padding: 0; font-weight: 400; line-height: 15px; white-space: nowrap; background: linear-gradient(#55585a, #393c3e); border-left: 1px solid #6a6d6f; border-bottom: 1px solid #292b2c; }
th:first-child, td:first-child { border-left: 0; }
td { height: 16px; padding: 0 1px; line-height: 15px; border-left: 1px solid #292b2c; border-bottom: 1px solid #292b2c; }
.mid input { display: block; margin: 0 auto; }
.actions { display: flex; justify-content: center; gap: 11px; margin: auto 0 7px; }
.actions button { height: 27px; padding: 0 11px; border: 1px solid #5a5e60; border-radius: 3px; background: linear-gradient(#53585a, #424749); font-weight: 700; font-size: 13px; }

.viewer-tools { display: flex; align-items: center; height: 73px; padding: 0 20px 10px; }
.viewer-tools svg { fill: none; stroke: #6e6e6e; stroke-width: 1.5; }
.thumbs { width: 24px; }
.center { flex: 1; display: flex; align-items: center; justify-content: center; gap: 12px; margin-right: 24px; }
.ratio { width: 24px; height: 21px; border: 1px solid #dcdcdc; color: #dcdcdc; font-size: 12px; line-height: 18px; }
.bar { width: 1px; height: 20px; margin: 0 3px; background: #dedede; }

.next { position: absolute; right: 27px; top: 441px; width: 44px; height: 44px; border-radius: 50%; background: rgba(40, 40, 40, 0.4); }
.next path { fill: none; stroke: #b5b5b5; stroke-width: 1.5; }
.marks { position: absolute; left: -1px; top: -1px; width: calc(100% + 2px); height: calc(100% + 2px); pointer-events: none; font-family: "Noto Sans", "Noto Sans CJK SC", sans-serif; }
.red-line { fill: none; stroke: #ff1f0f; stroke-width: 4; stroke-linecap: round; stroke-linejoin: round; }
.blue-line { fill: none; stroke: #1a9bff; stroke-width: 4; stroke-linecap: round; stroke-linejoin: round; }
.frame { width: calc(100% - 415px); }
.red { fill: #ff1f0f; }
.blue { fill: #1a9bff; }
.green { fill: #1aad19; }
.big { font-size: 33px; }
.url { font-size: 34px; }
.mid-text { font-size: 25px; }
</style>
